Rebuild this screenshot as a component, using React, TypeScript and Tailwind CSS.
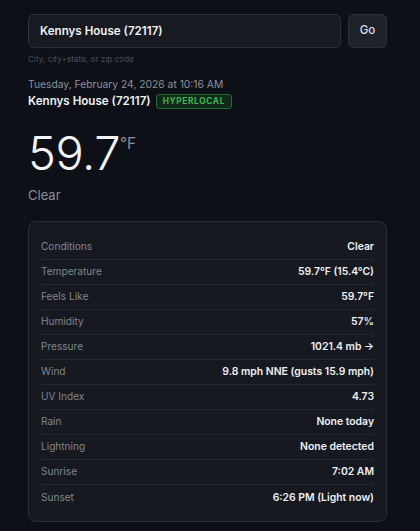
import React from 'react';

const rows: [string, string][] = [
  ['Conditions', 'Clear'],
  ['Temperature', '59.7°F (15.4°C)'],
  ['Feels Like', '59.7°F'],
  ['Humidity', '57%'],
  ['Pressure', '1021.4 mb →'],
  ['Wind', '9.8 mph NNE (gusts 15.9 mph)'],
  ['UV Index', '4.73'],
  ['Rain', 'None today'],
  ['Lightning', 'None detected'],
  ['Sunrise', '7:02 AM'],
  ['Sunset', '6:26 PM (Light now)'],
];

const App: React.FC = () => {
  return (
    <div className="min-h-[531px] bg-[#0d1017] font-['Inter',sans-serif] text-[#e6e8ec]">
      <div className="px-[28px] pt-[14px] w-[420px]">
        <div className="flex gap-[7px] w-[359px]">
          <input
            className="flex-1 h-[34px] rounded-[6px] border border-[#2c3039] bg-[#171a21] px-[11px] text-[11.6px] font-semibold text-[#f0f2f5] outline-none"
            defaultValue="Kennys House (72117)"
          />
          <button className="w-[39px] h-[34px] rounded-[6px] border border-[#2c3039] bg-[#1f222a] text-[11.5px] font-medium text-[#d8dbe0]">
            Go
          </button>
        </div>
        <p className="mt-[5px] text-[8.2px] leading-[12px] text-[#4a4f5a]">City, city+state, or zip code</p>

        <p className="mt-[12px] text-[10.3px] leading-[14px] text-[#8b909a]">Tuesday, February 24, 2026 at 10:16 AM</p>
        <div className="flex items-center gap-[5px] mt-[2px] h-[17px]">
          <h1 className="text-[11.6px] leading-[17px] font-semibold text-[#eef0f3]">Kennys House (72117)</h1>
          <span className="h-[15px] flex items-center rounded-[3px] border border-[#226b35] bg-[#11291a] px-[6px] text-[8.3px] font-bold tracking-[0.08em] text-[#3fb950]">
            HYPERLOCAL
          </span>
        </div>

        <div className="flex items-start mt-[18px]">
          <span className="text-[47px] leading-[50px] font-light text-[#f4f5f7] tracking-[-0.01em]">59.7</span>
          <span className="text-[15.5px] leading-[20px] mt-[6px] text-[#8b909a]">°F</span>
        </div>
        <p className="mt-[8px] text-[13px] leading-[18px] text-[#8b909a]">Clear</p>

        <div className="mt-[17px] w-[359px] rounded-[8px] border border-[#2a2e36] bg-[#161920] px-[12px] pt-[13px] pb-[11px]">
          {rows.map(([label, value], i) => (
            <div
              key={label}
              className={`flex items-center justify-between h-[25px] ${
                i < rows.length - 1 ? 'border-b border-[#23272e]' : ''
              }`}
            >
              <span className="text-[10.1px] text-[#80858f]">{label}</span>
              <span className="text-[10.4px] font-semibold text-[#eef0f3]">{value}</span>
            </div>
          ))}
        </div>
      </div>
    </div>
  );
};

export default App;
